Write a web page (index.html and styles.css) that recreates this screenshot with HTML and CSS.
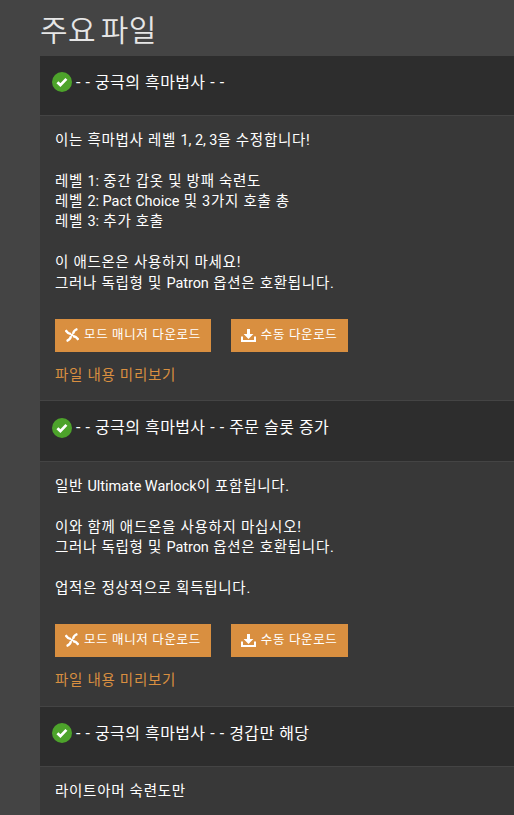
FILE: index.html
```
<!DOCTYPE html>
<html lang="ko">
<head>
    <meta charset="UTF-8">
    <meta name="viewport" content="width=device-width, initial-scale=1.0">
    <title>주요 파일</title>
    <link rel="stylesheet" href="styles.css">
</head>
<body>
    <!-- Shared icons -->
    <svg class="sprite" aria-hidden="true">
        <symbol id="icon-check" viewBox="0 0 20 20">
            <circle cx="10" cy="10" r="10" fill="#4da32b"/>
            <path d="M5.4 10.3l3 2.8 6-6.2" fill="none" stroke="#fff" stroke-width="2.8"/>
        </symbol>
        <symbol id="icon-manager" viewBox="0 0 14 14">
            <path d="M.6 2.2C2 4.6 3.8 5.8 6 6.2M12.4 1C10 1.8 8.4 3.4 8 5.9M13.4 11.8C12 9.4 10.2 8.4 8 8M1.6 13C4 12.2 5.6 10.6 6 8.1" fill="none" stroke="#fff" stroke-width="2.3"/>
            <path d="M5.8 5.8h2.4v2.4H5.8z" fill="#fff"/>
        </symbol>
        <symbol id="icon-download" viewBox="0 0 15 14">
            <path d="M6 0h3v5h3.4L7.5 10 2.6 5H6z" fill="#fff"/>
            <path d="M1 7.5V12h13V7.5" fill="none" stroke="#fff" stroke-width="2"/>
        </symbol>
    </svg>

    <main class="files">
        <h2 class="files-title">주요 파일</h2>
        <div class="file-list">
            <div class="file-header">
                <svg class="check"><use href="#icon-check"/></svg>
                <p class="file-name">- - 궁극의 흑마법사 - -</p>
            </div>
            <div class="file-body">
                <p class="description">이는 흑마법사 레벨 <span class="latin">1, 2, 3</span>을 수정합니다!<br><br>레벨 <span class="latin">1:</span> 중간 갑옷 및 방패 숙련도<br>레벨 <span class="latin">2: Pact Choice</span> 및 3가지 호출 총<br>레벨 <span class="latin">3:</span> 추가 호출<br><br>이 애드온은 사용하지 마세요!<br>그러나 독립형 및 <span class="latin">Patron</span> 옵션은 호환됩니다.</p>
                <div class="buttons">
                    <a class="btn" href="#"><svg class="manager"><use href="#icon-manager"/></svg><span>모드 매니저 다운로드</span></a>
                    <a class="btn" href="#"><svg class="download"><use href="#icon-download"/></svg><span>수동 다운로드</span></a>
                </div>
                <a class="preview" href="#">파일 내용 미리보기</a>
            </div>

            <div class="file-header tall">
                <svg class="check"><use href="#icon-check"/></svg>
                <p class="file-name">- - 궁극의 흑마법사 - - 주문 슬롯 증가</p>
            </div>
            <div class="file-body">
                <p class="description">일반 <span class="latin">Ultimate Warlock</span>이 포함됩니다.<br><br>이와 함께 애드온을 사용하지 마십시오!<br>그러나 독립형 및 <span class="latin">Patron</span> 옵션은 호환됩니다.<br><br>업적은 정상적으로 획득됩니다.</p>
                <div class="buttons">
                    <a class="btn" href="#"><svg class="manager"><use href="#icon-manager"/></svg><span>모드 매니저 다운로드</span></a>
                    <a class="btn" href="#"><svg class="download"><use href="#icon-download"/></svg><span>수동 다운로드</span></a>
                </div>
                <a class="preview" href="#">파일 내용 미리보기</a>
            </div>

            <div class="file-header">
                <svg class="check"><use href="#icon-check"/></svg>
                <p class="file-name">- - 궁극의 흑마법사 - - 경갑만 해당</p>
            </div>
            <div class="file-body last">
                <p class="description">라이트아머 숙련도만</p>
            </div>
        </div>
    </main>
</body>
</html>
```
FILE: styles.css
```
* {
    box-sizing: border-box;
}

body {
    margin: 0;
    background-color: #444;
    color: #fff;
    font-family: Roboto, "Noto Sans CJK KR", sans-serif;
    font-size: 14.5px;
    line-height: 20.4px;
    letter-spacing: 0.72px;
}

p {
    margin: 0;
    white-space: nowrap;
}

.sprite {
    display: none;
}

.latin {
    letter-spacing: -0.05px;
}

.files {
    padding-left: 40px;
}

.files-title {
    margin: 0;
    height: 56px;
    padding-top: 11px;
    color: #e6e6e6;
    font-size: 30px;
    font-weight: 350;
    line-height: 40px;
    letter-spacing: 0.4px;
    word-spacing: -3px;
}

.file-header {
    display: flex;
    height: 60px;
    padding: 16px 12px 0;
    border-bottom: 1px solid #444;
    background-color: #2d2d2d;
}

.file-header.tall {
    height: 61px;
    padding-top: 17px;
}

.check {
    flex: none;
    width: 20px;
    height: 20px;
    margin-right: 4px;
}

.file-name {
    font-size: 16px;
    line-height: 21px;
    letter-spacing: 0.4px;
    word-spacing: 0.3px;
}

.tall .file-name {
    line-height: 20px;
}

.file-body {
    height: 285px;
    padding: 14.7px 15px 0;
    border-bottom: 1px solid #444;
    background-color: #383838;
}

.tall + .file-body {
    height: 245px;
    padding-top: 15px;
}

.file-body.last {
    height: 48px;
    padding-top: 15px;
    border-bottom: 0;
}

.buttons {
    display: flex;
    gap: 20px;
    margin-top: 25px;
}

.btn {
    display: flex;
    height: 33px;
    padding: 0 10px;
    background-color: #d98f40;
    color: #fff;
    font-size: 12.5px;
    line-height: 31px;
    letter-spacing: 0.65px;
    text-decoration: none;
    white-space: nowrap;
}

.manager {
    width: 14px;
    height: 14px;
    margin: 9px 5px 0 0;
}

.download {
    width: 15px;
    height: 14px;
    margin: 10px 5px 0 0;
}

.preview {
    display: block;
    margin-top: 14px;
    color: #d98f40;
    text-decoration: none;
}
```
